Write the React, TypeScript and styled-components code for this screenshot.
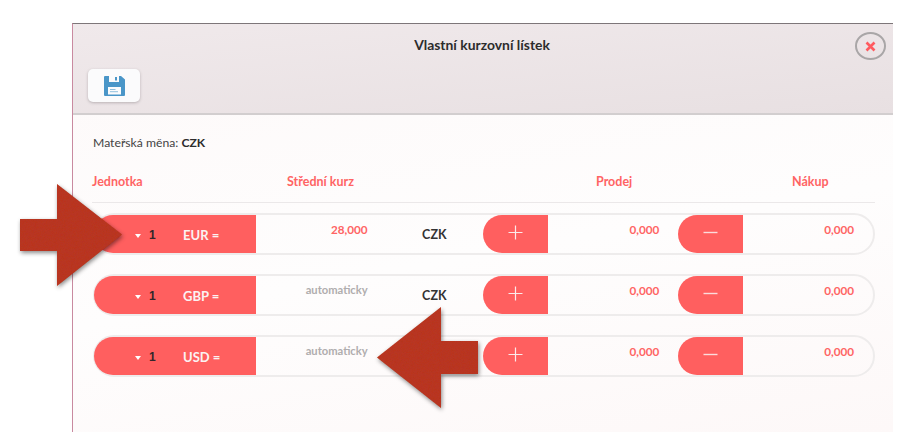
import React from "react";
import styled, { createGlobalStyle } from "styled-components";

const Global = createGlobalStyle`
  html, body { margin: 0; padding: 0; background: #fff; }
  body { font-family: Lato, "Open Sans", Arial, sans-serif; font-size: 12px; color: #333; }
`;

const Page = styled.div`
  position: relative;
  width: 916px;
  height: 447px;
  overflow: hidden;
  padding: 23px 0 0 72px;
  box-sizing: border-box;
`;

const Modal = styled.div`
  position: relative;
  width: 821px;
  height: 409px;
  box-sizing: border-box;
  border-top: 1px solid #7d7679;
  border-left: 1px solid #c98aa0;
  background: linear-gradient(170deg, #fdf9f9 0%, #fefdfd 55%, #fdf8f8 100%);
`;

const Header = styled.header`
  height: 91px;
  box-sizing: border-box;
  border-bottom: 2px solid #d2cecf;
  background: linear-gradient(175deg, #f0e9eb 0%, #e8e0e2 100%);
  padding: 13px 17px 0 15px;
`;

const Title = styled.h1`
  margin: 0;
  text-align: center;
  font-size: 13.9px;
  line-height: 16px;
  font-weight: 700;
  color: #2c2c2c;
`;

const SaveButton = styled.button`
  display: flex;
  align-items: center;
  justify-content: center;
  width: 52px;
  height: 33px;
  margin-top: 16px;
  padding: 0;
  border: 0;
  border-radius: 5px;
  background: #fbfbfc;
  box-shadow: 0 1px 3px rgba(90, 80, 85, 0.35);
`;

const CloseButton = styled.button`
  position: absolute;
  top: 8px;
  right: 7px;
  display: flex;
  align-items: center;
  justify-content: center;
  width: 31px;
  height: 28px;
  padding: 0;
  border: 2px solid #a9a6a7;
  border-radius: 50%;
  background: transparent;
`;

const Body = styled.main`
  padding: 20px 18px 0 19px;
`;

const Parent = styled.div`
  margin-left: 1px;
  font-size: 12.2px;
  line-height: 16px;
  color: #444;
  b { color: #2c2c2c; font-weight: 700; }
`;

const Columns = styled.div`
  display: grid;
  grid-template-columns: 195px 309px 196px 1fr;
  margin-top: 23px;
  padding-bottom: 12px;
  border-bottom: 1px solid #ebe8e9;
`;

const ColTitle = styled.div`
  color: #ff6464;
  font-size: 12.5px;
  line-height: 16px;
  font-weight: 700;
`;

const Rows = styled.div`
  display: flex;
  flex-direction: column;
  gap: 19px;
  margin: 10px 0 0 1px;
`;

const Row = styled.div`
  display: flex;
  align-items: stretch;
  width: 782px;
  height: 42px;
  box-sizing: border-box;
  border: 2px solid #eeecec;
  border-radius: 21px;
`;

const Unit = styled.div`
  display: flex;
  align-items: center;
  width: 162px;
  margin-left: -1px;
  box-sizing: border-box;
  padding: 1px 0 0 41px;
  border-radius: 19px 0 0 19px;
  background: #ff5f5f;
  font-weight: 700;
`;

const Caret = styled.span`
  width: 0;
  height: 0;
  margin-top: 2px;
  border: 3.5px solid transparent;
  border-top: 4px solid #fff;
  border-bottom: 0;
`;

const Count = styled.span`
  margin-left: 8px;
  width: 34px;
  font-family: "Liberation Sans", Arial, sans-serif;
  font-size: 12px;
  color: #33262a;
`;

const UnitCode = styled.span`
  color: #fbf2f2;
  font-size: 13px;
`;

const Amount = styled.div<{ $w: number; $pad?: number; $muted?: boolean }>`
  width: ${(p) => p.$w}px;
  box-sizing: border-box;
  padding: 6px ${(p) => p.$pad ?? 0}px 0 0;
  text-align: right;
  font-size: ${(p) => (p.$muted ? 11.2 : 11.7)}px;
  line-height: 16px;
  font-weight: 700;
  color: ${(p) => (p.$muted ? "#b0adae" : "#ff6464")};
`;

const Currency = styled.div`
  display: flex;
  align-items: center;
  justify-content: flex-end;
  width: 115px;
  padding: 1px 36px 0 0;
  box-sizing: border-box;
  font-size: 12.5px;
  font-weight: 700;
  color: #333;
`;

const Step = styled.div<{ $w: number }>`
  display: flex;
  align-items: center;
  justify-content: center;
  width: ${(p) => p.$w}px;
  padding-bottom: 4px;
  box-sizing: border-box;
  border-radius: 19px 0 0 19px;
  background: #ff5f5f;
`;

const Arrow = styled.svg`
  position: absolute;
  overflow: visible;
  filter: drop-shadow(1px 2px 2px rgba(0, 0, 0, 0.45));
`;

const LeftArrow = styled(Arrow)`
  left: 20px;
  top: 184px;
`;

const RightArrow = styled(Arrow)`
  left: 377px;
  top: 307px;
`;

const Glyph = styled.svg`
  display: block;
`;

const Plus = () => (
  <Glyph width="15" height="15" viewBox="0 0 15 15">
    <path d="M7.5 0.5v14M0.5 7.5h14" stroke="#fbeaea" strokeWidth="1.2" fill="none" />
  </Glyph>
);

const Minus = () => (
  <Glyph width="15" height="15" viewBox="0 0 15 15">
    <path d="M0.5 7.5h14" stroke="#fbdcdc" strokeWidth="1.4" fill="none" />
  </Glyph>
);

const Grain = ({ id }: { id: string }) => (
  <filter id={id} x="0" y="0" width="100%" height="100%">
    <feTurbulence type="fractalNoise" baseFrequency="0.9" numOctaves={2} seed={3} result="noise" />
    <feColorMatrix
      in="noise"
      type="matrix"
      values="0 0 0 0 0.35  0 0 0 0 0.05  0 0 0 0 0.02  0 0 0 0.5 -0.12"
      result="tint"
    />
    <feComposite in="tint" in2="SourceGraphic" operator="in" result="clipped" />
    <feMerge>
      <feMergeNode in="SourceGraphic" />
      <feMergeNode in="clipped" />
    </feMerge>
  </filter>
);

const data = [
  { code: "EUR", rate: "28,000", auto: false },
  { code: "GBP", rate: "automaticky", auto: true },
  { code: "USD", rate: "automaticky", auto: true },
];

export default function App() {
  return (
    <>
      <Global />
      <Page>
        <Modal>
          <Header>
            <Title>Vlastní kurzovní lístek</Title>
            <SaveButton aria-label="Uložit">
              <svg width="21" height="20" viewBox="0 0 21 20">
                <path fillRule="evenodd" fill="#4a96c8" d="M1 0h16l4 3.5V19a1 1 0 0 1-1 1H1a1 1 0 0 1-1-1V1a1 1 0 0 1 1-1zM5 0v6h10V0zM4 11v7.5h13V11z" />
                <rect x="11" y="1" width="2" height="3.5" fill="#4a96c8" />
                <rect x="6" y="13" width="5.5" height="1" fill="#8fbfdd" />
                <rect x="6" y="15.2" width="8" height="1" fill="#8fbfdd" />
              </svg>
            </SaveButton>
          </Header>
          <CloseButton aria-label="Zavřít">
            <svg width="11" height="11" viewBox="0 0 11 11">
              <path d="M1.5 1.5l8 8M9.5 1.5l-8 8" stroke="#ff5a5f" strokeWidth="2.6" fill="none" />
            </svg>
          </CloseButton>
          <Body>
            <Parent>
              Mateřská měna: <b>CZK</b>
            </Parent>
            <Columns>
              <ColTitle>Jednotka</ColTitle>
              <ColTitle>Střední kurz</ColTitle>
              <ColTitle>Prodej</ColTitle>
              <ColTitle>Nákup</ColTitle>
            </Columns>
            <Rows>
              {data.map((d) => (
                <Row key={d.code}>
                  <Unit>
                    <Caret />
                    <Count>1</Count>
                    <UnitCode>{d.code} =</UnitCode>
                  </Unit>
                  <Amount $w={112} $muted={d.auto}>{d.rate}</Amount>
                  <Currency>CZK</Currency>
                  <Step $w={66}><Plus /></Step>
                  <Amount $w={130} $pad={19}>0,000</Amount>
                  <Step $w={65}><Minus /></Step>
                  <Amount $w={130} $pad={19}>0,000</Amount>
                </Row>
              ))}
            </Rows>
          </Body>
        </Modal>
        <LeftArrow width="102" height="102" viewBox="0 0 102 102">
          <defs><Grain id="grain-left" /></defs>
          <path d="M0 35h37V0l65 50.5L37 102V67H0z" fill="#bb3420" filter="url(#grain-left)" />
        </LeftArrow>
        <RightArrow width="101" height="101" viewBox="0 0 101 101">
          <defs><Grain id="grain-right" /></defs>
          <path d="M101 34H64V0L0 50.5 64 101V67h37z" fill="#bb3420" filter="url(#grain-right)" />
        </RightArrow>
      </Page>
    </>
  );
}
